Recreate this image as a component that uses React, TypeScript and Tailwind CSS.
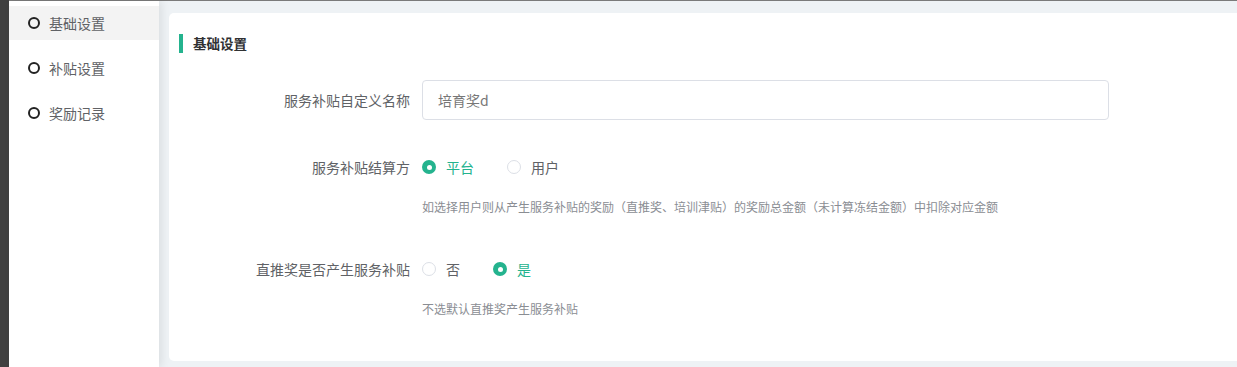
import React from "react";

const font = { fontFamily: '"Noto Sans CJK SC", "Noto Sans", sans-serif' };

function Radio({ checked, label, last }: { checked: boolean; label: string; last?: boolean }) {
  return (
    <div className={`flex items-center ${last ? "" : "mr-[33px]"}`}>
      {checked ? (
        <span className="w-[14px] h-[14px] rounded-full bg-[#24b38e] flex items-center justify-center">
          <span className="w-[5px] h-[5px] rounded-full bg-white" />
        </span>
      ) : (
        <span className="w-[14px] h-[14px] rounded-full border border-[#dcdfe6] bg-white" />
      )}
      <span className={`ml-[10px] text-[14px] ${checked ? "text-[#24b38e]" : "text-[#606266]"}`}>{label}</span>
    </div>
  );
}

export default function App() {
  const items = ["基础设置", "补贴设置", "奖励记录"];
  return (
    <div className="w-[1237px] h-[367px] overflow-hidden flex bg-[#eef2f5]" style={font}>
      <div className="w-[9px] h-full bg-[#404040] shrink-0" />
      <div className="flex-1 flex flex-col">
        <div className="h-[1px] bg-[#7a7a7a] shrink-0" />
        <div className="flex flex-1">
          <div className="w-[150px] shrink-0 bg-white pt-[5px] flex flex-col gap-[11px] shadow-[3px_0_8px_rgba(0,0,0,0.08)] relative z-10">
            {items.map((t, i) => (
              <div
                key={t}
                className={`h-[34px] flex items-center pl-[19px] ${i === 0 ? "bg-[#f3f3f3]" : ""}`}
              >
                <span className="w-[12px] h-[12px] rounded-full border-2 border-[#222]" />
                <span className="ml-[9px] text-[14px] text-[#606266] leading-none">{t}</span>
              </div>
            ))}
          </div>
          <div className="flex-1 pl-[10px] pt-[12px] pb-[6px] flex">
            <div className="flex-1 bg-white rounded-l-[5px] pt-[21px] pl-[10px] pb-[40px] flex flex-col">
              <div className="flex items-center h-[19px]">
                <span className="w-[4px] h-[19px] bg-[#24b38e]" />
                <span className="ml-[10px] text-[13.5px] font-bold text-[#303133]">基础设置</span>
              </div>

              <div className="flex items-center mt-[27px] h-[40px]">
                <div className="w-[231px] text-right text-[14px] text-[#606266]">服务补贴自定义名称</div>
                <div className="ml-[12px] w-[687px] h-[40px] border border-[#dcdfe6] rounded-[4px] flex items-center pl-[15px] text-[14px] text-[#777]">
                  培育奖d
                </div>
              </div>

              <div className="flex items-center mt-[27px] h-[40px]">
                <div className="w-[231px] text-right text-[14px] text-[#606266]">服务补贴结算方</div>
                <div className="ml-[12px] flex items-center">
                  <Radio checked label="平台" />
                  <Radio checked={false} label="用户" last />
                </div>
              </div>
              <div className="mt-[10px] ml-[243px] h-[20px] leading-[20px] text-[12px] text-[#8a8d93]">
                如选择用户则从产生服务补贴的奖励（直推奖、培训津贴）的奖励总金额（未计算冻结金额）中扣除对应金额
              </div>

              <div className="flex items-center mt-[32px] h-[40px]">
                <div className="w-[231px] text-right text-[14px] text-[#606266]">直推奖是否产生服务补贴</div>
                <div className="ml-[12px] flex items-center">
                  <Radio checked={false} label="否" />
                  <Radio checked label="是" last />
                </div>
              </div>
              <div className="mt-[10px] ml-[243px] h-[20px] leading-[20px] text-[12px] text-[#8a8d93]">
                不选默认直推奖产生服务补贴
              </div>
            </div>
          </div>
        </div>
      </div>
    </div>
  );
}
